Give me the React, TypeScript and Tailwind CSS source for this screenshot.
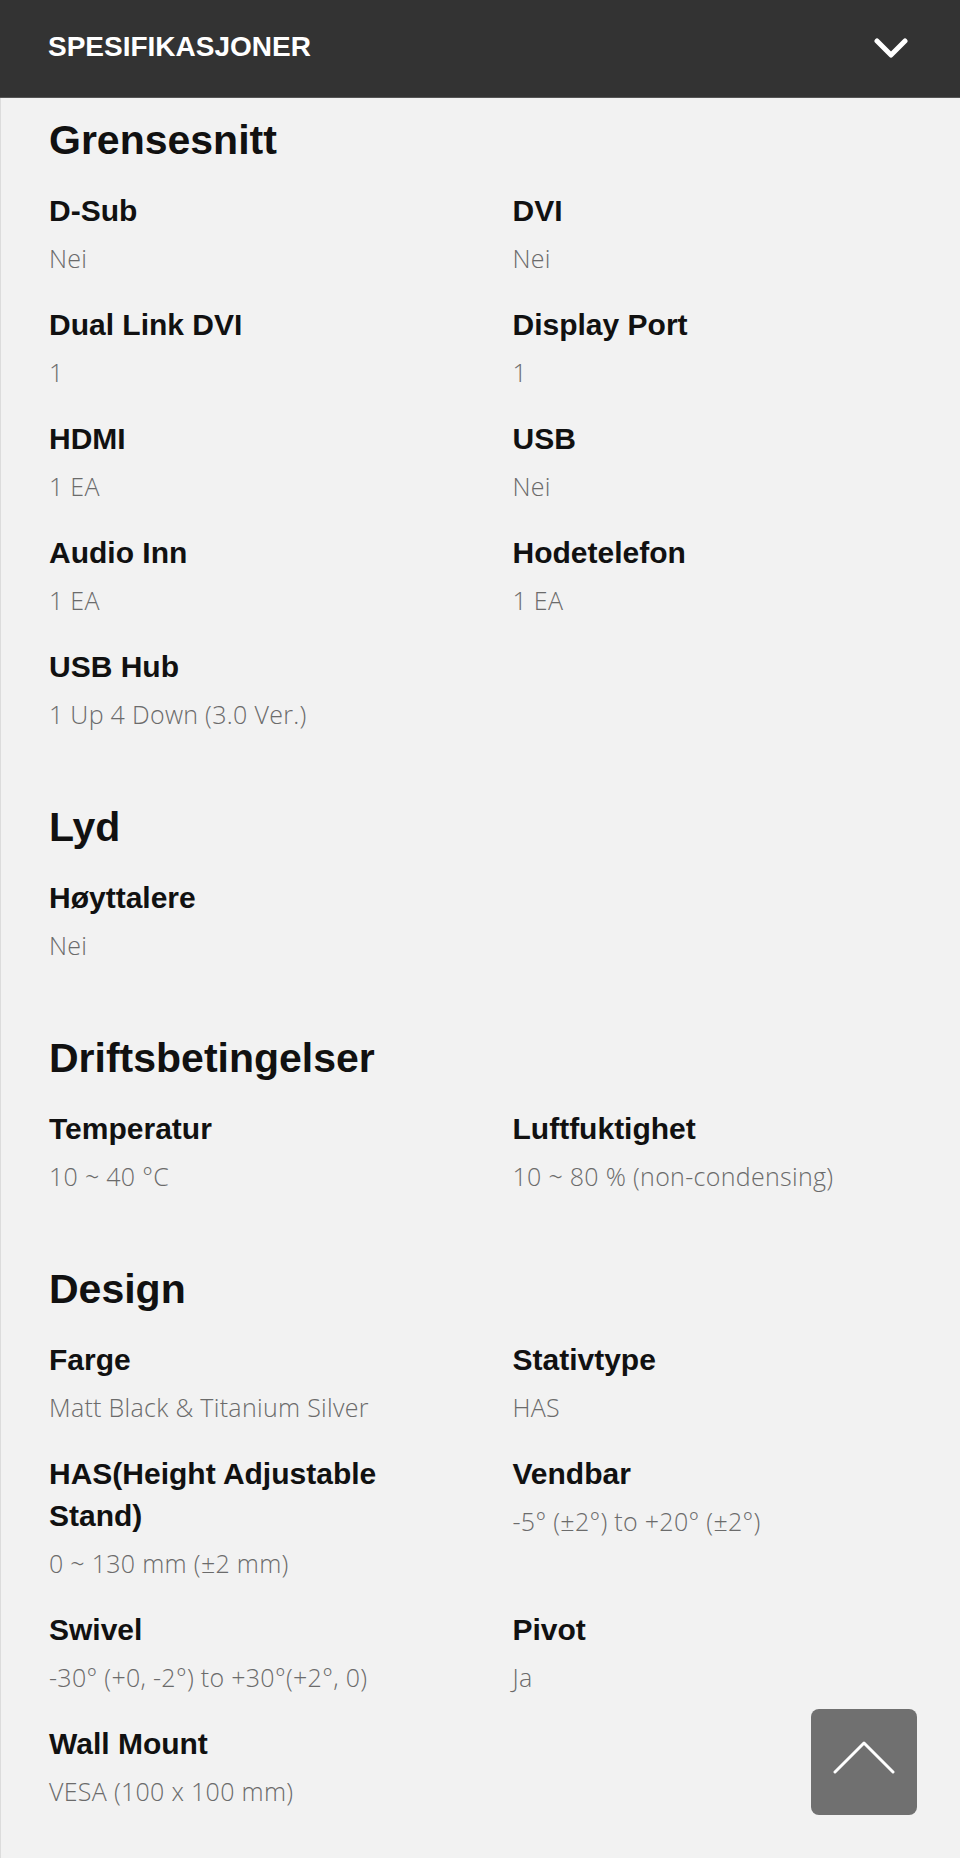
import React from 'react';

type Spec = { label: string; value: string };
type Section = { title: string; specs: Spec[] };

const SECTIONS: Section[] = [
  {
    title: 'Grensesnitt',
    specs: [
      { label: 'D-Sub', value: 'Nei' },
      { label: 'DVI', value: 'Nei' },
      { label: 'Dual Link DVI', value: '1' },
      { label: 'Display Port', value: '1' },
      { label: 'HDMI', value: '1 EA' },
      { label: 'USB', value: 'Nei' },
      { label: 'Audio Inn', value: '1 EA' },
      { label: 'Hodetelefon', value: '1 EA' },
      { label: 'USB Hub', value: '1 Up 4 Down (3.0 Ver.)' },
    ],
  },
  {
    title: 'Lyd',
    specs: [{ label: 'Høyttalere', value: 'Nei' }],
  },
  {
    title: 'Driftsbetingelser',
    specs: [
      { label: 'Temperatur', value: '10 ~ 40 °C' },
      { label: 'Luftfuktighet', value: '10 ~ 80 % (non-condensing)' },
    ],
  },
  {
    title: 'Design',
    specs: [
      { label: 'Farge', value: 'Matt Black & Titanium Silver' },
      { label: 'Stativtype', value: 'HAS' },
      { label: 'HAS(Height Adjustable Stand)', value: '0 ~ 130 mm (±2 mm)' },
      { label: 'Vendbar', value: '-5° (±2°) to +20° (±2°)' },
      { label: 'Swivel', value: '-30° (+0, -2°) to +30°(+2°, 0)' },
      { label: 'Pivot', value: 'Ja' },
      { label: 'Wall Mount', value: 'VESA (100 x 100 mm)' },
    ],
  },
];

function SpecItem({ spec }: { spec: Spec }) {
  return (
    <div>
      <p className="text-[30px] font-bold leading-[42px] text-[#111]">{spec.label}</p>
      <p className="mt-2 font-['Open_Sans',sans-serif] text-[25px] font-light leading-[36px] tracking-[0.3px] text-[#6b6b6b]">
        {spec.value}
      </p>
    </div>
  );
}

export default function App() {
  return (
    <div className="min-h-[1858px] w-[960px] bg-[#f2f2f2] font-['Liberation_Sans',Arial,sans-serif]">
      <header className="flex h-[98px] items-center justify-between border-b border-[#555] bg-[#333333] pl-12 pr-[52px]">
        <h1 className="pb-1 text-[28px] font-bold text-white">SPESIFIKASJONER</h1>
        <svg width="34" height="22" viewBox="0 0 34 22" fill="none">
          <polyline points="3,3 17,17 31,3" stroke="white" strokeWidth="5" strokeLinecap="round" strokeLinejoin="round" />
        </svg>
      </header>

      <main className="border-l border-[#dcdcdc] px-12 pb-[50px] pt-[17px]">
        {SECTIONS.map((section, i) => (
          <section key={section.title} className={i > 0 ? 'mt-[70px]' : ''}>
            <h2 className="mb-[25px] text-[41px] font-bold leading-[50px] text-[#111]">{section.title}</h2>
            <div className="grid grid-cols-2 gap-x-16 gap-y-[28px]">
              {section.specs.map(spec => (
                <SpecItem key={spec.label} spec={spec} />
              ))}
            </div>
          </section>
        ))}
      </main>

      <button className="fixed bottom-[43px] right-[43px] flex h-[106px] w-[106px] items-center justify-center rounded-lg bg-[#707070]">
        <svg width="62" height="36" viewBox="0 0 62 36" fill="none" className="mb-2">
          <polyline points="2,32 31,3 60,32" stroke="white" strokeWidth="3" strokeLinecap="round" strokeLinejoin="round" />
        </svg>
      </button>
    </div>
  );
}
